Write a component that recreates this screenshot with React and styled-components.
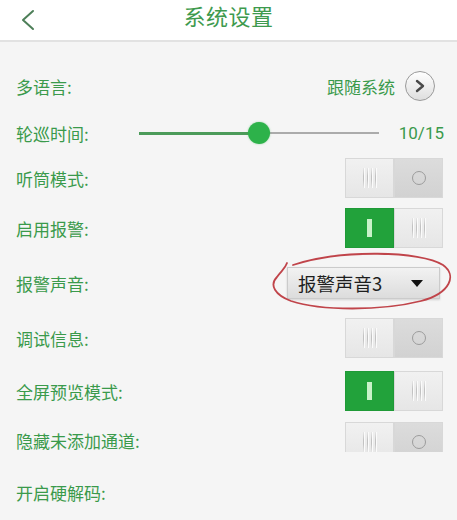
import React from "react";
import styled, { createGlobalStyle } from "styled-components";

const GlobalStyle = createGlobalStyle`
  html, body {
    margin: 0;
    padding: 0;
    background: #f5f5f5;
    font-family: "Noto Sans CJK SC", "Noto Sans", sans-serif;
  }
`;

const Page = styled.div`
  width: 457px;
  height: 520px;
  overflow: hidden;
  background: #f5f5f5;
`;

const Header = styled.header`
  height: 40px;
  background: #fff;
  border-bottom: 2px solid #e2e2e2;
  display: grid;
  grid-template-columns: 60px 1fr 60px;
  align-items: center;
`;

const BackButton = styled.div`
  display: flex;
  align-items: center;
  padding-left: 20px;
  height: 100%;
`;

const Title = styled.h1`
  margin: 0;
  text-align: center;
  font-size: 22px;
  font-weight: 400;
  color: #3e9a4e;
  letter-spacing: 0.5px;
  line-height: 1;
  padding-bottom: 10px;
`;

const List = styled.div`
  padding-top: 20px;
  display: flex;
  flex-direction: column;
`;

const Row = styled.div`
  height: ${(p) => p.$h}px;
  padding: 0 14px 0 16px;
  display: flex;
  align-items: center;
  justify-content: space-between;
`;

const Label = styled.span`
  font-size: 17px;
  color: #3a9a4b;
  white-space: nowrap;
`;

const Value = styled.div`
  display: flex;
  align-items: center;
  gap: 10px;
  color: #3a9a4b;
  font-size: 17px;
  padding-right: 8px;
`;

const CircleButton = styled.div`
  width: 28px;
  height: 28px;
  border-radius: 50%;
  border: 1px solid #9a9a9a;
  background: linear-gradient(#ffffff, #dedede);
  display: flex;
  align-items: center;
  justify-content: center;
`;

const SliderRow = styled.div`
  height: 46px;
  padding: 0 13px 0 16px;
  display: grid;
  grid-template-columns: 123px 240px 1fr;
  align-items: center;
`;

const Track = styled.div`
  position: relative;
  height: 22px;
  display: flex;
  align-items: center;
`;

const Filled = styled.div`
  height: 3px;
  background: #4c9b5a;
  flex: 0 0 ${(p) => p.$pct}%;
`;

const Rest = styled.div`
  height: 2px;
  background: #ababab;
  flex: 1;
`;

const Thumb = styled.div`
  position: absolute;
  top: 0;
  width: 22px;
  height: 22px;
  margin-left: -11px;
  border-radius: 50%;
  background: #2db24a;
  box-shadow: 0 0 2px rgba(45, 178, 74, 0.5);
`;

const SliderValue = styled.span`
  text-align: right;
  font-size: 17px;
  color: #3a9a4b;
  font-family: "Roboto", "Noto Sans", sans-serif;
`;

const ToggleFrame = styled.div`
  width: 98px;
  height: ${(p) => (p.$clip ? 30 : 40)}px;
  align-self: ${(p) => (p.$clip ? "flex-start" : "center")};
  margin-top: ${(p) => (p.$clip ? 6 : 0)}px;
  overflow: hidden;
`;

const ToggleBody = styled.div`
  width: 98px;
  height: 40px;
  display: grid;
  grid-template-columns: 1fr 1fr;
  box-shadow: 0 1px 1px rgba(0, 0, 0, 0.12);
`;

const Half = styled.div`
  display: flex;
  align-items: center;
  justify-content: center;
  background: ${(p) =>
    p.$tone === "green"
      ? "#22a23b"
      : p.$tone === "dark"
      ? "linear-gradient(#dcdcdc, #d2d2d2)"
      : "linear-gradient(#f1f1f1, #e6e6e6)"};
  border: 1px solid
    ${(p) => (p.$tone === "green" ? "#1f9a37" : "#d8d8d8")};
`;

const Grip = styled.div`
  display: flex;
  gap: 3px;
  & > span {
    width: 1px;
    height: 20px;
    background: linear-gradient(#e6e6e6, #c2c2c2 40%, #c2c2c2 60%, #e6e6e6);
    box-shadow: 1px 0 0 #fbfbfb;
  }
`;

const OnBar = styled.div`
  width: 5px;
  height: 18px;
  background: #c9f2c9;
`;

const OffRing = styled.div`
  width: 12px;
  height: 12px;
  border-radius: 50%;
  border: 1.5px solid #9c9c9c;
`;

const SelectWrap = styled.div`
  position: relative;
  margin-right: 3px;
`;

const Select = styled.div`
  width: 153px;
  height: 32px;
  box-sizing: border-box;
  padding: 0 16px 0 10px;
  display: flex;
  align-items: center;
  justify-content: space-between;
  background: linear-gradient(#f2f2f2, #dcdcdc);
  border: 1px solid #cbcbcb;
  box-shadow: 0 1px 2px rgba(0, 0, 0, 0.15);
  font-size: 18.5px;
  color: #1e1e1e;
`;

const Caret = styled.span`
  width: 0;
  height: 0;
  border-left: 6px solid transparent;
  border-right: 6px solid transparent;
  border-top: 7px solid #111;
`;

const Annotation = styled.svg`
  position: absolute;
  left: -16px;
  top: -16px;
  pointer-events: none;
`;

function Toggle({ on, clip }) {
  const grip = (
    <Grip>
      <span />
      <span />
      <span />
      <span />
    </Grip>
  );
  return (
    <ToggleFrame $clip={clip}>
      <ToggleBody>
        {on ? (
          <>
            <Half $tone="green">
              <OnBar />
            </Half>
            <Half>{grip}</Half>
          </>
        ) : (
          <>
            <Half>{grip}</Half>
            <Half $tone="dark">
              <OffRing />
            </Half>
          </>
        )}
      </ToggleBody>
    </ToggleFrame>
  );
}

const toggles = [
  { label: "听筒模式:", on: false, h: 44 },
  { label: "启用报警:", on: true, h: 56 },
];

const toggles2 = [
  { label: "调试信息:", on: false, h: 56 },
  { label: "全屏预览模式:", on: true, h: 50 },
  { label: "隐藏未添加通道:", on: false, h: 48, clip: true },
];

export default function App() {
  return (
    <Page>
      <GlobalStyle />
      <Header>
        <BackButton>
          <svg width="16" height="22" viewBox="0 0 16 22">
            <path
              d="M13 2 L3 11 L13 20"
              fill="none"
              stroke="#4d7f58"
              strokeWidth="2"
              strokeLinecap="round"
              strokeLinejoin="round"
            />
          </svg>
        </BackButton>
        <Title>系统设置</Title>
        <div />
      </Header>
      <List>
        <Row $h={48}>
          <Label>多语言:</Label>
          <Value>
            跟随系统
            <CircleButton>
              <svg width="12" height="14" viewBox="0 0 12 14">
                <path
                  d="M3 2 L9 7 L3 12"
                  fill="none"
                  stroke="#4a4a4a"
                  strokeWidth="2.4"
                  strokeLinecap="round"
                  strokeLinejoin="round"
                />
              </svg>
            </CircleButton>
          </Value>
        </Row>
        <SliderRow>
          <Label>轮巡时间:</Label>
          <Track>
            <Filled $pct={50} />
            <Rest />
            <Thumb style={{ left: "50%" }} />
          </Track>
          <SliderValue>10/15</SliderValue>
        </SliderRow>
        {toggles.map((t) => (
          <Row key={t.label} $h={t.h}>
            <Label>{t.label}</Label>
            <Toggle on={t.on} />
          </Row>
        ))}
        <Row $h={54}>
          <Label>报警声音:</Label>
          <SelectWrap>
            <Select>
              报警声音3
              <Caret />
            </Select>
            <Annotation width="184" height="62" viewBox="0 0 184 62">
              <path
                d="M22 14 C70 -2 150 0 172 14 C186 24 180 42 150 50 C110 60 50 60 20 50 C4 44 -2 34 6 26 C10 20 14 18 16 12"
                fill="none"
                stroke="#c0444a"
                strokeWidth="1.8"
                strokeLinecap="round"
              />
            </Annotation>
          </SelectWrap>
        </Row>
        {toggles2.map((t) => (
          <Row key={t.label} $h={t.h}>
            <Label>{t.label}</Label>
            <Toggle on={t.on} clip={t.clip} />
          </Row>
        ))}
        <Row $h={56}>
          <Label>开启硬解码:</Label>
        </Row>
      </List>
    </Page>
  );
}
